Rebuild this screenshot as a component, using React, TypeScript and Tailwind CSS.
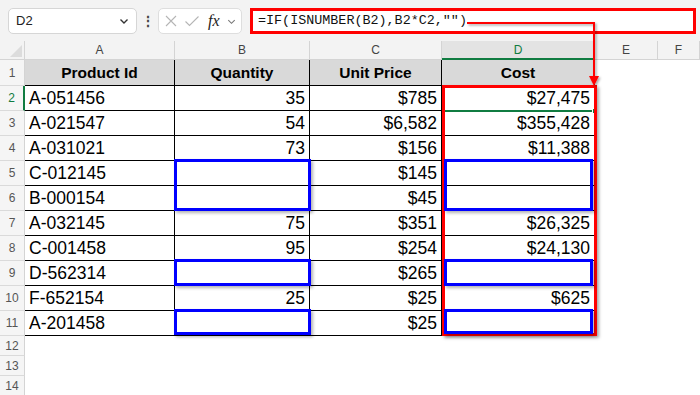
import React from "react";

const rows: string[][] = [
  ["A-051456", "35", "$785", "$27,475"],
  ["A-021547", "54", "$6,582", "$355,428"],
  ["A-031021", "73", "$156", "$11,388"],
  ["C-012145", "", "$145", ""],
  ["B-000154", "", "$45", ""],
  ["A-032145", "75", "$351", "$26,325"],
  ["C-001458", "95", "$254", "$24,130"],
  ["D-562314", "", "$265", ""],
  ["F-652154", "25", "$25", "$625"],
  ["A-201458", "", "$25", ""],
];

const font = { fontFamily: "'Liberation Sans', Arial, sans-serif" };

function RowHead({ n, active, h }: { n: number; active?: boolean; h: string }) {
  return (
    <div
      className={`${h} flex items-center justify-center bg-[#f5f5f5] border-b border-[#dadada] text-[12px] ${
        active ? "text-[#107c41] border-r-2 border-r-[#107c41]" : "text-[#555] border-r border-r-[#d4d4d4]"
      }`}
    >
      {n}
    </div>
  );
}

export default function App() {
  return (
    <div className="relative w-[700px] h-[395px] overflow-hidden bg-white text-black" style={font}>
      {/* Formula bar */}
      <div className="h-[41px] bg-[#f3f3f3] flex items-start pt-[8px] pl-[8px] pr-[4px]">
        <div className="w-[129px] h-[26px] bg-white border border-[#d6d6d6] rounded-[5px] flex items-center justify-between pl-[7px] pr-[6px] text-[13px] text-[#222]">
          <span>D2</span>
          <svg width="12" height="12" viewBox="0 0 12 12" fill="none" stroke="#333" strokeWidth="1.4">
            <path d="M2.5 4.5 L6 8 L9.5 4.5" />
          </svg>
        </div>
        <div className="w-[21px] h-[26px] flex items-center justify-center text-[#444] text-[14px] font-bold">⋮</div>
        <div className="w-[84px] h-[26px] bg-white border border-[#dedede] rounded-[5px] flex items-center pl-[5px] gap-[6px]">
          <svg width="14" height="14" viewBox="0 0 14 14" stroke="#b5b5b5" strokeWidth="1.1" fill="none">
            <path d="M2 2 L12 12 M12 2 L2 12" />
          </svg>
          <svg width="16" height="14" viewBox="0 0 16 14" stroke="#b5b5b5" strokeWidth="1.1" fill="none">
            <path d="M1.5 7.5 L5.5 11.5 L14.5 2.5" />
          </svg>
          <span className="text-[16px] italic text-[#222] ml-[2px]" style={{ fontFamily: "'Liberation Serif', 'Times New Roman', serif" }}>
            fx
          </span>
          <svg width="11" height="11" viewBox="0 0 12 12" fill="none" stroke="#777" strokeWidth="1.2">
            <path d="M2.5 4.5 L6 8 L9.5 4.5" />
          </svg>
        </div>
        <div
          className="ml-[8px] w-[446px] h-[26px] bg-white border-[3px] border-[#ff0000] flex items-center pl-[5px] text-[13.4px] text-[#111]"
          style={{ fontFamily: "'Liberation Mono', 'Courier New', monospace" }}
        >
          =IF(ISNUMBER(B2),B2*C2,"")
        </div>
      </div>

      {/* Grid */}
      <div className="grid grid-cols-[25px_150px_135px_132px_153px_63px_1fr]">
        {/* column headers */}
        <div className="h-[19px] bg-[#f3f3f3] border-r border-b border-[#d4d4d4] relative">
          <svg className="absolute right-[2px] bottom-[2px]" width="12" height="12" viewBox="0 0 12 12">
            <path d="M12 0 L12 12 L0 12 Z" fill="#dcdcdc" />
          </svg>
        </div>
        {["A", "B", "C"].map((c) => (
          <div key={c} className="h-[19px] bg-[#f3f3f3] border-r border-b border-[#d4d4d4] flex items-center justify-center text-[12px] text-[#444]">
            {c}
          </div>
        ))}
        <div className="h-[19px] bg-[#e3e3e3] border-r border-[#d4d4d4] border-b-2 border-b-[#107c41] flex items-center justify-center text-[12px] text-[#107c41]">
          D
        </div>
        {["E", "F"].map((c) => (
          <div key={c} className="h-[19px] bg-[#f3f3f3] border-r border-b border-[#d4d4d4] flex items-center justify-center text-[12px] text-[#444]">
            {c}
          </div>
        ))}

        {/* row 1 */}
        <RowHead n={1} h="h-[26px]" />
        {["Product Id", "Quantity", "Unit Price", "Cost"].map((t) => (
          <div key={t} className="h-[26px] bg-[#d9d9d9] border-r border-b border-black flex items-center justify-center text-[15.5px] font-bold">
            {t}
          </div>
        ))}
        <div className="h-[26px]" />
        <div className="h-[26px]" />

        {/* data rows */}
        {rows.map((r, i) => (
          <React.Fragment key={i}>
            <RowHead n={i + 2} active={i === 0} h="h-[25px]" />
            <div className="h-[25px] border-r border-b border-black flex items-center pl-[4px] pt-[1px] text-[17.5px]">{r[0]}</div>
            <div className="h-[25px] border-r border-b border-black flex items-center justify-end pr-[4px] pt-[1px] text-[17.5px]">{r[1]}</div>
            <div className="h-[25px] border-r border-b border-black flex items-center justify-end pr-[4px] pt-[1px] text-[17.5px]">{r[2]}</div>
            <div className="h-[25px] border-r border-b border-black flex items-center justify-end pr-[4px] pt-[1px] text-[17.5px]">{r[3]}</div>
            <div className="h-[25px]" />
            <div className="h-[25px]" />
          </React.Fragment>
        ))}

        {/* empty rows */}
        {[12, 13, 14].map((n) => (
          <React.Fragment key={n}>
            <RowHead n={n} h="h-[20px]" />
            <div className="h-[20px] col-span-6" />
          </React.Fragment>
        ))}
      </div>

      {/* Selection of D2 */}
      <div className="absolute left-[442px] top-[85px] w-[154px] h-[27px] border-2 border-[#107c41]" />
      <div className="absolute left-[592px] top-[108px] w-[6px] h-[6px] bg-[#107c41] border border-white" />

      {/* Red box around column D */}
      <div className="absolute left-[442px] top-[85px] w-[155px] h-[251px] border-[3px] border-[#ff0000] shadow-[2px_2px_3px_rgba(0,0,0,0.35)]" />

      {/* Blue boxes */}
      <div className="absolute left-[174px] top-[159px] w-[137px] h-[52px] border-[3px] border-[#0000ff] shadow-[2px_2px_3px_rgba(0,0,0,0.3)]" />
      <div className="absolute left-[174px] top-[259px] w-[137px] h-[27px] border-[3px] border-[#0000ff] shadow-[2px_2px_3px_rgba(0,0,0,0.3)]" />
      <div className="absolute left-[174px] top-[309px] w-[137px] h-[26px] border-[3px] border-[#0000ff] shadow-[2px_2px_3px_rgba(0,0,0,0.3)]" />
      <div className="absolute left-[444px] top-[159px] w-[149px] h-[52px] border-[3px] border-[#0000ff] shadow-[2px_2px_3px_rgba(0,0,0,0.3)]" />
      <div className="absolute left-[444px] top-[259px] w-[149px] h-[27px] border-[3px] border-[#0000ff] shadow-[2px_2px_3px_rgba(0,0,0,0.3)]" />
      <div className="absolute left-[444px] top-[309px] w-[149px] h-[25px] border-[3px] border-[#0000ff] shadow-[2px_2px_3px_rgba(0,0,0,0.3)]" />

      {/* Arrow */}
      <svg className="absolute left-0 top-0 pointer-events-none" width="700" height="395" viewBox="0 0 700 395">
        <defs>
          <filter id="sh" x="-10%" y="-10%" width="130%" height="130%">
            <feDropShadow dx="1.5" dy="1.5" stdDeviation="1" floodColor="#000" floodOpacity="0.35" />
          </filter>
        </defs>
        <g filter="url(#sh)">
          <path d="M467 23 H594 V78" stroke="#ff0000" strokeWidth="2" fill="none" />
          <path d="M589 76 L599 76 L594 86 Z" fill="#ff0000" />
        </g>
      </svg>
    </div>
  );
}
